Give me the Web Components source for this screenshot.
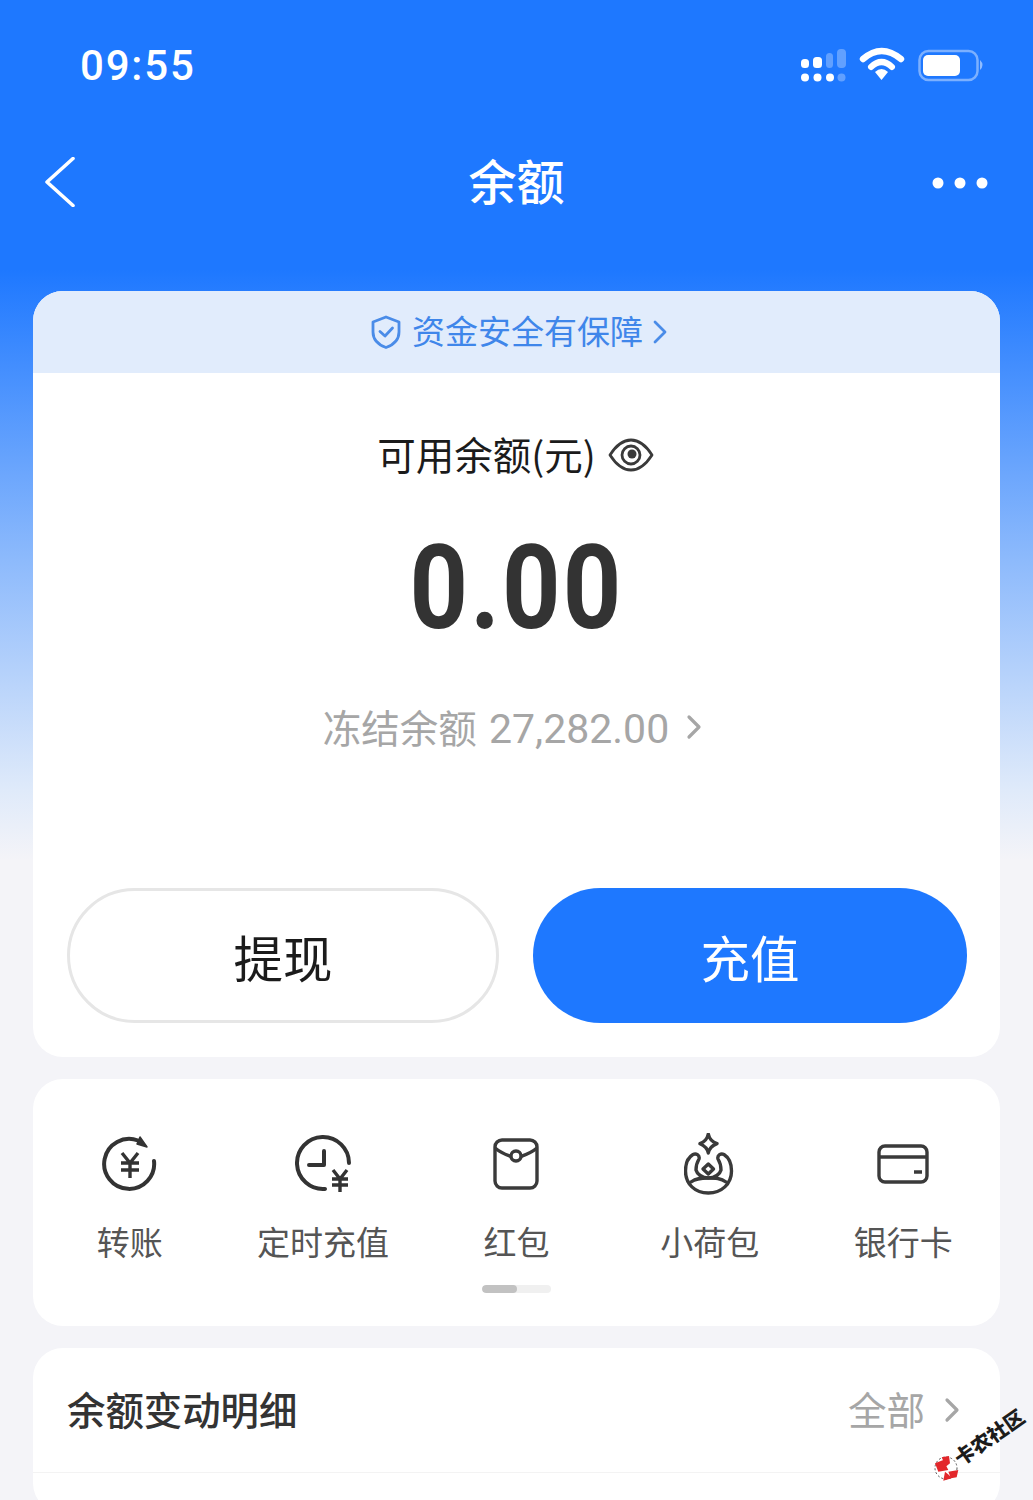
<!DOCTYPE html>
<html lang="zh">
<head>
<meta charset="utf-8">
<title>余额</title>
<style>
  html, body { margin: 0; height: 1500px; overflow: hidden; }
  body {
    font-family: "Noto Sans CJK SC", "Liberation Sans", sans-serif;
    background: linear-gradient(180deg, #1e78ff 0, #1e78ff 270px, #8dbafc 560px, #dfeafa 790px, #f4f4f8 860px, #f4f4f8 100%);
  }
</style>
</head>
<body>
<balance-page></balance-page>

<script>
function define(name, html) {
  customElements.define(name, class extends HTMLElement {
    constructor() {
      super();
      this.attachShadow({ mode: 'open' }).innerHTML = html;
    }
  });
}

define('status-bar', `
  <style>
    :host { display: flex; justify-content: space-between; align-items: center; height: 132px; padding: 0 47px 0 80px; box-sizing: border-box; color: #fff; }
    .time { font: 500 42px/1 Roboto, "Liberation Sans", sans-serif; letter-spacing: 1.800px; }
    svg { display: block; }
  </style>
  <span class="time">09:55</span>
  <svg width="186" height="40" viewBox="0 0 186 40" fill="#fff">
    <rect x="1" y="13" width="8" height="9" rx="3.500"/><rect x="13" y="11" width="9" height="11" rx="3.500"/>
    <rect x="26" y="7" width="7" height="15" rx="3.500" opacity=".3"/><rect x="37" y="3" width="9" height="19" rx="4" opacity=".3"/>
    <circle cx="5" cy="31.500" r="4"/><circle cx="17.500" cy="31.500" r="4"/><circle cx="30" cy="31.500" r="4"/><circle cx="41.500" cy="31.500" r="4" opacity=".3"/>
    <path d="M63 13 Q81.500 -3 101 13" fill="none" stroke="#fff" stroke-width="6.400" stroke-linecap="round"/>
    <path d="M71 21 Q81.500 11 92 21" fill="none" stroke="#fff" stroke-width="6" stroke-linecap="round"/>
    <path d="M75 26 Q81.500 20 88 26 L81.500 34Z"/>
    <rect x="119.500" y="5" width="58" height="29" rx="9" fill="none" stroke="#fff" stroke-opacity=".42" stroke-width="2.500"/>
    <rect x="123" y="9" width="37" height="21" rx="5"/>
    <path d="M180 14 Q185 19 180 24Z" opacity=".5"/>
  </svg>
`);

define('nav-bar', `
  <style>
    :host { display: grid; grid-template-columns: 1fr auto 1fr; align-items: center; height: 100px; padding: 0 45px; box-sizing: border-box; color: #fff; }
    h1 { margin: 0 0 7px; font-size: 48px; font-weight: 500; line-height: 1; }
    svg { display: block; }
    .more { justify-self: end; margin-top: 2px; }
  </style>
  <svg width="30" height="50" viewBox="0 0 30 50"><path d="M28 1.500 L2 25 L28 48.500" fill="none" stroke="#fff" stroke-width="3.600" stroke-linecap="round" stroke-linejoin="round"/></svg>
  <h1>余额</h1>
  <svg class="more" width="56" height="14" viewBox="0 0 56 14" fill="#fff"><circle cx="6" cy="7" r="5.500"/><circle cx="28" cy="7" r="5.500"/><circle cx="50" cy="7" r="5.500"/></svg>
`);

define('app-card', `
  <style>
    :host { display: block; background: #fff; border-radius: 30px; overflow: hidden; }
  </style>
  <slot></slot>
`);

define('safety-banner', `
  <style>
    :host { display: flex; align-items: center; justify-content: center; gap: 11px; height: 82px; padding-left: 5px; background: #e1ecfc; color: #3f86ea; font-size: 33px; }
    svg { display: block; }
    span { line-height: 1; margin-bottom: 4px; }
    .chev { margin-left: -1px; }
  </style>
  <svg width="30" height="34" viewBox="0 0 30 34" fill="none" stroke="#4a8ce8" stroke-width="2.800" stroke-linejoin="round" stroke-linecap="round">
    <path d="M15 2 L28 7 V17 C28 25 22 30 15 32.500 C8 30 2 25 2 17 V7Z"/>
    <path d="M9 16.500 L14 21 L21.500 13"/>
  </svg>
  <span>资金安全有保障</span>
  <svg class="chev" width="14" height="24" viewBox="0 0 14 24" fill="none" stroke="#4a8ce8" stroke-width="2.800" stroke-linecap="round" stroke-linejoin="round"><path d="M2 2 L12 12 L2 22"/></svg>
`);

define('balance-summary', `
  <style>
    :host { display: block; text-align: center; height: 515px; box-sizing: border-box; padding-top: 56px; }
    .label { display: flex; justify-content: center; align-items: center; gap: 12px; height: 52px; padding-right: 2px; font-size: 38.500px; color: #1b1b1b; }
    .label span { margin-bottom: 4px; }
    .amount { font: 700 116px/110px Roboto, "Liberation Sans", sans-serif; color: #333; margin-top: 52px; height: 110px; letter-spacing: 2.500px; transform: scaleX(.88); }
    .frozen { display: flex; justify-content: center; align-items: center; gap: 17px; margin-top: 59px; height: 50px; padding-right: 8px; font-size: 38.500px; color: #a6a6a6; }
    .frozen span { margin-bottom: 2px; }
    .num { font-family: Roboto, "Liberation Sans", sans-serif; font-size: 41px; margin-left: 2px; }
    svg { display: block; }
  </style>
  <div class="label">
    <span>可用余额(元)</span>
    <svg width="46" height="36" viewBox="0 0 46 36" fill="none" stroke="#3a3a3a" stroke-width="2.800">
      <path d="M2 18 C9 7 16 3 23 3 C30 3 37 7 44 18 C37 29 30 33 23 33 C16 33 9 29 2 18Z" stroke-linejoin="round"/>
      <circle cx="23" cy="18" r="9"/>
      <circle cx="24" cy="17" r="4.500" fill="#3a3a3a" stroke="none"/>
    </svg>
  </div>
  <div class="amount">0.00</div>
  <div class="frozen">
    <span>冻结余额<span class="num"> 27,282.00</span></span>
    <svg width="16" height="26" viewBox="0 0 16 26" fill="none" stroke="#a6a6a6" stroke-width="3.200" stroke-linecap="round" stroke-linejoin="round"><path d="M3 3 L13 13 L3 23"/></svg>
  </div>
`);

define('action-row', `
  <style>
    :host { display: grid; grid-template-columns: 432px 434px; gap: 34px; padding: 0 33px 34px 34px; }
  </style>
  <slot></slot>
`);

define('pill-button', `
  <style>
    :host { display: flex; align-items: center; justify-content: center; height: 135px; box-sizing: border-box; padding-top: 2px; border-radius: 68px; font-size: 49.500px; line-height: 1; }
    :host([primary]) { background: #1e78ff; color: #fff; }
    :host(:not([primary])) { border: 3px solid #e6e6e6; color: #1b1b1b; }
  </style>
  <slot></slot>
`);

define('shortcut-row', `
  <style>
    :host { display: block; height: 247px; position: relative; }
    .items { display: grid; grid-template-columns: repeat(5, 193.400px); }
    .bar { position: absolute; left: 449px; top: 206px; width: 69px; height: 8px; border-radius: 4px; background: #f0f0f0; overflow: hidden; }
    .bar i { display: block; width: 35px; height: 8px; background: #c2c2c2; border-radius: 4px; }
  </style>
  <div class="items"><slot></slot></div>
  <div class="bar"><i></i></div>
`);

define('shortcut-item', `
  <style>
    :host { display: flex; flex-direction: column; align-items: center; padding-top: 52px; font-size: 33px; color: #555; }
    .icon { height: 66px; width: 70px; display: flex; align-items: center; justify-content: center; }
    span { margin-top: 24px; line-height: 40px; }
    ::slotted(svg) { display: block; }
  </style>
  <div class="icon"><slot name="icon"></slot></div>
  <span><slot></slot></span>
`);

define('detail-header', `
  <style>
    :host { display: flex; justify-content: space-between; align-items: center; height: 124px; padding: 0 40px 0 34px; border-bottom: 1px solid #f3f3f3; }
    h2 { margin: 0 0 3px; font-size: 38.400px; font-weight: 500; color: #333; line-height: 1; }
    .all { display: flex; align-items: center; gap: 19px; font-size: 38.500px; color: #a6a6a6; line-height: 1; }
    .all span { margin-bottom: 3px; }
    svg { display: block; }
  </style>
  <h2>余额变动明细</h2>
  <div class="all"><span>全部</span>
    <svg width="16" height="26" viewBox="0 0 16 26" fill="none" stroke="#a6a6a6" stroke-width="3.200" stroke-linecap="round" stroke-linejoin="round"><path d="M3 3 L13 13 L3 23"/></svg>
  </div>
`);

define('forum-mark', `
  <style>
    :host { position: absolute; left: 930px; top: 1410px; width: 100px; height: 72px; display: block; }
    svg { position: absolute; left: 2px; top: 44px; }
    span { position: absolute; left: 19px; top: 17px; font-size: 20px; font-weight: 900; line-height: 1; color: #1c1c1c; transform: rotate(-35deg); white-space: nowrap; }
  </style>
  <svg width="28" height="28" viewBox="0 0 28 28">
    <circle cx="14" cy="14" r="11" fill="#fff" stroke="#555" stroke-width="1" stroke-dasharray="2 2"/>
    <path d="M3 9.300 L11.300 6 L16.300 16 L6.300 17.700Z M9.700 3.300 L17 2 L18 9.300 L13.700 12.700Z M16.300 17.700 L26.300 16 L24.700 23.300 L19 24.300Z M13 17.700 L17 21 L19.700 24.300 L11.300 26.700Z" fill="#e3272b"/>
  </svg>
  <span>卡农社区</span>
`);

define('balance-page', `
  <style>
    :host { display: block; width: 1033px; height: 1500px; overflow: hidden; }
    main { display: flex; flex-direction: column; gap: 22px; padding: 59px 33px 0; }
  </style>
  <status-bar></status-bar>
  <nav-bar></nav-bar>
  <main>
    <app-card>
      <safety-banner></safety-banner>
      <balance-summary></balance-summary>
      <action-row>
        <pill-button>提现</pill-button>
        <pill-button primary>充值</pill-button>
      </action-row>
    </app-card>
    <app-card>
      <shortcut-row>
        <shortcut-item>
          <svg slot="icon" width="56" height="60" viewBox="0 0 56 60" fill="none" stroke="#333" stroke-width="4" stroke-linecap="round" stroke-linejoin="round">
            <path d="M52 27 A25 25 0 1 1 36 6.500"/>
            <path d="M38 3 L45 13 L35 10Z" fill="#333" stroke-width="1.500"/>
            <path d="M20 19 L28 29 L36 19 M19 29 H37 M19 36 H37 M28 29 V44" stroke-width="3.400" stroke-linecap="butt"/>
          </svg>
          转账
        </shortcut-item>
        <shortcut-item>
          <svg slot="icon" width="56" height="58" viewBox="0 0 56 58" fill="none" stroke="#333" stroke-width="4" stroke-linecap="round" stroke-linejoin="round">
            <path d="M54 28 A26 26 0 1 0 30 54"/>
            <path d="M29 16 V30 H14"/>
            <path d="M38 35 L45 44 L52 35 M37 44 H53 M37 50 H53 M45 44 V57" stroke-width="3.400" stroke-linecap="butt"/>
          </svg>
          定时充值
        </shortcut-item>
        <shortcut-item>
          <svg slot="icon" width="46" height="52" viewBox="0 0 46 52" fill="none" stroke="#3a3a3a" stroke-width="3.400" stroke-linejoin="round">
            <rect x="2" y="2" width="42" height="48" rx="7"/>
            <path d="M2 10 C8 15 14 17 18 18.500 M28 18.500 C32 17 38 15 44 10"/>
            <circle cx="23" cy="18" r="5"/>
          </svg>
          红包
        </shortcut-item>
        <shortcut-item>
          <svg slot="icon" width="52" height="62" viewBox="0 0 52 62" fill="none" stroke="#3a3a3a" stroke-width="3.400" stroke-linejoin="round" stroke-linecap="round">
            <path d="M24.300 1 C25.300 6 28.300 9 33 10.700 C28.300 12.500 25.300 15 24.300 20 C23.300 15 20.300 12.500 16 10.700 C20.300 9 23.300 6 24.300 1Z"/>
            <path d="M9 21.500 C3 25 1.500 31 1.500 38 C1.500 51 11 60 24.300 60 C37.500 60 47.500 51 47.500 38 C47.500 31 45.500 25 40 21.500 C37 20 33 22 34 26 C37 31 37 34 37 37 C36 41 31 45 24.300 45 C18 45 13 41 12 37 C12 34 12 31 15 26 C16 22 12 20 9 21.500Z"/>
            <path d="M7 49 C12 45 18 45 24.300 45 C31 45 37 45 42 49"/>
            <path d="M24.300 31 L29.500 36 L24.300 41 L19 36Z"/>
          </svg>
          小荷包
        </shortcut-item>
        <shortcut-item>
          <svg slot="icon" width="52" height="40" viewBox="0 0 52 40" fill="none" stroke="#3a3a3a" stroke-width="3.400" stroke-linejoin="round">
            <rect x="2" y="2" width="48" height="36" rx="6"/>
            <path d="M2 13 H50"/>
            <path d="M37 28 H45"/>
          </svg>
          银行卡
        </shortcut-item>
      </shortcut-row>
    </app-card>
    <app-card>
      <detail-header></detail-header>
      <div style="height:40px"></div>
    </app-card>
  </main>
  <forum-mark></forum-mark>
`);
</script>
</body>
</html>
